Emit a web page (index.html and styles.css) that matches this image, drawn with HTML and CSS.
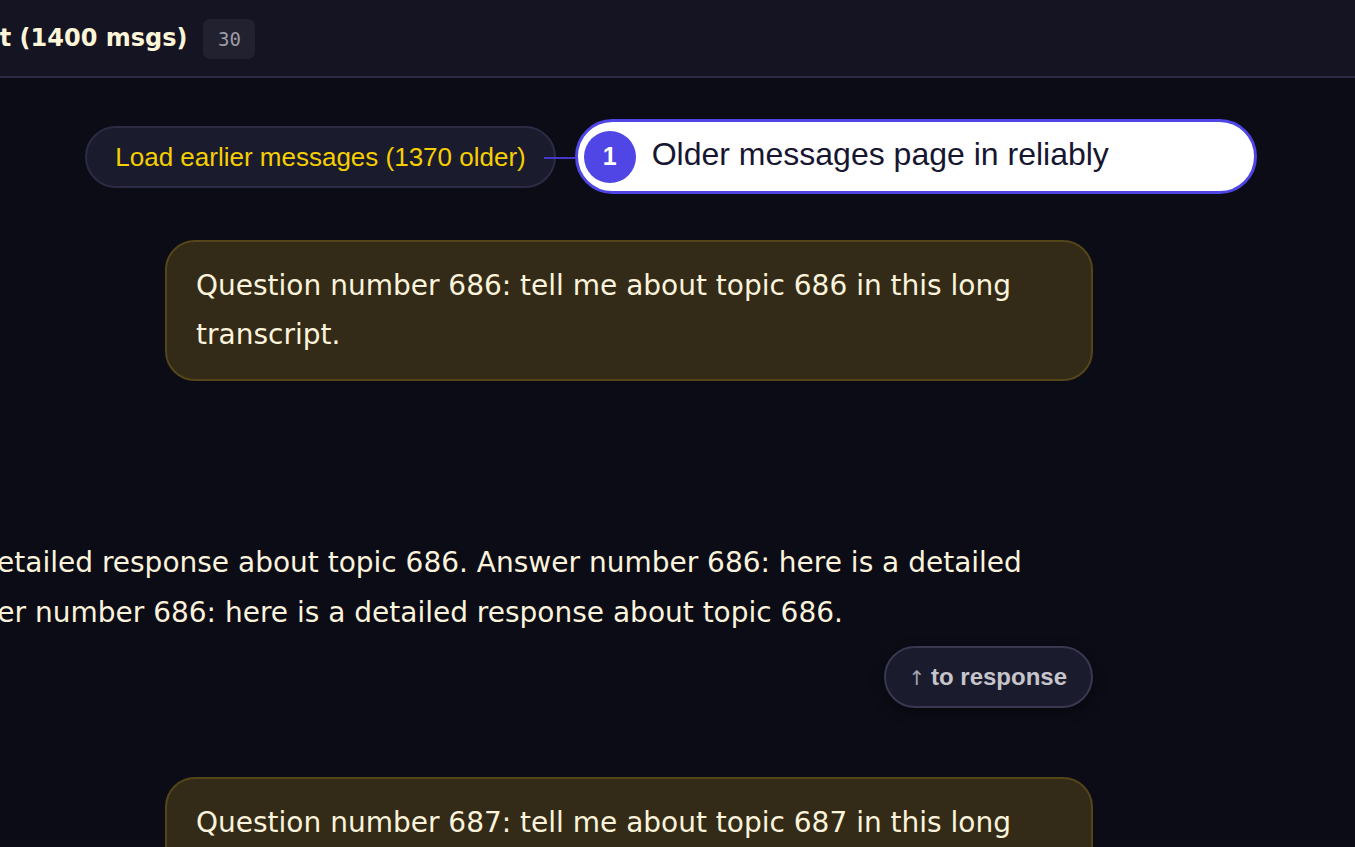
FILE: index.html
```html
<!DOCTYPE html>
<html lang="en">
<head>
<meta charset="utf-8">
<title>Long transcript</title>
<link rel="stylesheet" href="styles.css">
</head>
<body>
<header class="topbar">
  <div class="topbar-inner">
    <h1 class="title">Long transcript (1400 msgs)</h1>
    <span class="count">30</span>
  </div>
</header>
<main class="thread">
  <div class="load-row">
    <div class="load-wrap">
      <button class="load-btn">Load earlier messages (1370 older)</button>
      <div class="callout">
        <span class="callout-num">1</span>
        <span class="callout-text">Older messages page in reliably</span>
      </div>
    </div>
  </div>
  <div class="msg user">
    <div class="bubble">Question number 686: tell me about topic 686 in this long transcript.</div>
  </div>
  <div class="msg assistant">
    <p class="answer">Answer number 686: here is a detailed response about topic 686. Answer number 686: here is a detailed response about topic 686. Answer number 686: here is a detailed response about topic 686.</p>
    <button class="jump"><span class="arrow">↑</span> to response</button>
  </div>
  <div class="msg user">
    <div class="bubble">Question number 687: tell me about topic 687 in this long transcript.</div>
  </div>
</main>
</body>
</html>
```
FILE: styles.css
```css
html, body {
  margin: 0;
  padding: 0;
}
body {
  background: #0c0c17;
  width: 1355px;
  height: 847px;
  overflow: hidden;
  font-family: "DejaVu Sans", sans-serif;
  color: #fbf3dc;
}
.topbar {
  height: 76px;
  background: #151422;
  border-bottom: 2px solid #2c2a44;
  display: flex;
  align-items: center;
}
.topbar-inner {
  display: flex;
  align-items: center;
  gap: 16px;
  margin-left: -197px;
}
.title {
  margin: 0;
  font-family: "DejaVu Sans", sans-serif;
  font-weight: bold;
  font-size: 24px;
  color: #fdf5d8;
  white-space: nowrap;
}
.count {
  font-family: "DejaVu Sans Mono", monospace;
  font-size: 19px;
  color: #9d9ca8;
  background: #222130;
  border-radius: 7px;
  width: 52px;
  height: 40px;
  display: inline-flex;
  align-items: center;
  justify-content: center;
  margin-top: 2px;
}
.thread {
  margin-left: -452px;
  width: 1545px;
  display: flex;
  flex-direction: column;
}
.load-row {
  margin-top: 48px;
  display: flex;
  justify-content: center;
}
.load-wrap {
  position: relative;
  display: flex;
}
.load-btn {
  height: 62px;
  padding: 0 28px;
  border-radius: 31px;
  background: #1b1b2e;
  border: 2px solid #2c2b44;
  color: #f5cf00;
  font-family: "Liberation Sans", Arial, sans-serif;
  font-size: 26px;
  white-space: nowrap;
}
.callout {
  position: absolute;
  left: calc(100% + 19px);
  top: -7px;
  width: 682px;
  height: 75px;
  box-sizing: border-box;
  background: #ffffff;
  border: 3px solid #5046e5;
  border-radius: 38px;
  display: flex;
  align-items: center;
  gap: 16px;
  padding-left: 6px;
}
.callout::before {
  content: "";
  position: absolute;
  left: -34px;
  top: 35px;
  width: 32px;
  height: 2px;
  background: #4338ca;
}
.callout-num {
  width: 52px;
  height: 52px;
  border-radius: 50%;
  background: #5046e5;
  color: #ffffff;
  font-family: "Liberation Sans", Arial, sans-serif;
  font-weight: bold;
  font-size: 25px;
  display: flex;
  align-items: center;
  justify-content: center;
  flex: none;
}
.callout-text {
  font-family: "Liberation Sans", Arial, sans-serif;
  font-size: 32px;
  color: #161630;
  white-space: nowrap;
  margin-top: -4px;
}
.msg {
  display: flex;
  flex-direction: column;
}
.msg.user {
  align-items: flex-end;
  margin-top: 52px;
}
.msg.assistant + .msg.user {
  margin-top: 69px;
}
.bubble {
  box-sizing: border-box;
  width: 928px;
  padding: 19px 29px;
  background: #332b17;
  border: 2px solid #55461a;
  border-radius: 30px;
  font-size: 28px;
  line-height: 49.4px;
  color: #fbf3dc;
}
.msg.assistant {
  margin-top: 157px;
  align-items: flex-end;
}
.answer {
  margin: 0;
  align-self: stretch;
  font-size: 28px;
  line-height: 50px;
  color: #fbf3dc;
}
.jump {
  margin-top: 8px;
  height: 62px;
  padding: 0 24px 0 23px;
  border-radius: 31px;
  background: #1b1b2e;
  border: 2px solid #393850;
  box-shadow: 0 4px 14px rgba(0, 0, 0, 0.45);
  color: #c6c5cc;
  font-family: "Liberation Sans", Arial, sans-serif;
  font-weight: bold;
  font-size: 24px;
  white-space: nowrap;
}
.arrow {
  font-family: "DejaVu Sans", sans-serif;
  font-weight: normal;
  font-size: 20px;
  color: #a6a5b2;
  margin-right: -1px;
}
```
